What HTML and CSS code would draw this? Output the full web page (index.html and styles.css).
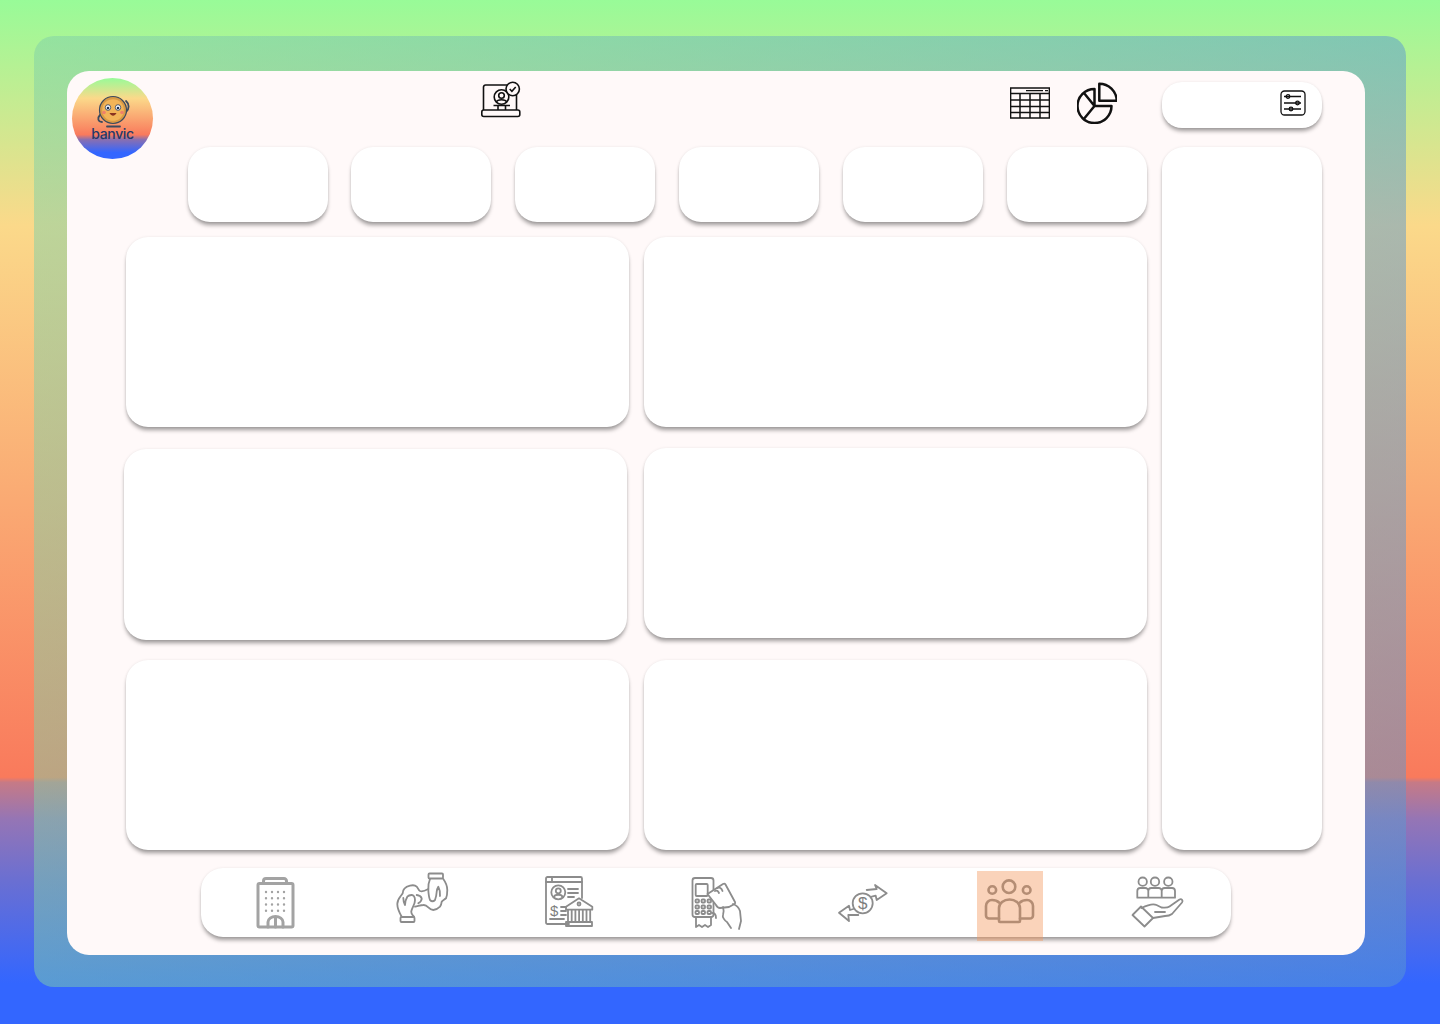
FILE: index.html
```html
<!DOCTYPE html>
<html lang="en">
<head>
<meta charset="utf-8">
<title>Banvic dashboard</title>
<link rel="stylesheet" href="styles.css">
</head>
<body>
<div class="frame">
  <div class="panel">
    <div class="logo">
      <svg class="mascot" viewBox="0 0 40 40" aria-hidden="true">
        <path d="M7 22c-3 3-2 7 2 7M33 8c3.500 3 3.500 8 0 11" class="mascot-arm"/>
        <circle cx="20" cy="17" r="13.500" class="coin"/>
        <circle cx="20" cy="17" r="10.800" class="coin-in"/>
        <ellipse cx="15" cy="14.500" rx="2.700" ry="2.800" class="eye"/>
        <ellipse cx="25" cy="14.500" rx="2.700" ry="2.800" class="eye"/>
        <circle cx="15" cy="15" r="1.300" class="pupil"/>
        <circle cx="25" cy="15" r="1.300" class="pupil"/>
        <path d="M16.500 20c2 3.500 5 3.500 7 0z" class="mouth"/>
        <circle cx="11" cy="19.500" r="1.800" class="cheek"/>
        <circle cx="29" cy="19.500" r="1.800" class="cheek"/>
        <path d="M14 33.500h13" class="mascot-arm"/>
      </svg>
      <span class="logo-text">banvic</span>
    </div>
    <div class="layout">
      <div class="header">
        <svg class="head-icon laptop" viewBox="0 0 40 44" aria-hidden="true">
          <path d="M2.500 30V7a2 2 0 0 1 2-2h29a2 2 0 0 1 2 2v23"/>
          <rect x="0.800" y="30" width="38" height="6.500" rx="2"/>
          <circle cx="20.500" cy="17" r="7.300"/>
          <circle cx="20.500" cy="15.500" r="2.800"/>
          <path d="M15.500 22c.8-3 9.200-3 10 0"/>
          <path d="M12.500 25.500h16.500M17 25.500v4.500M24.500 25.500v4.500"/>
          <circle cx="31.700" cy="9" r="6.700" class="badge"/>
          <path d="M28.700 9l2.200 2.300 3.800-4.300"/>
        </svg>
        <svg class="head-icon table" viewBox="0 0 40 44" aria-hidden="true">
          <rect x="0.600" y="8" width="38.800" height="30"/>
          <path d="M0.500 13.500h39M0.500 20h39M0.500 26.500h39M0.500 32.500h39M10 13.500V38M20 13.500V38M30 13.500V38"/>
          <path d="M16 10.700h17M35 10.700h3" class="thick"/>
        </svg>
        <svg class="head-icon pie" viewBox="0 0 40 44" aria-hidden="true">
          <path d="M17.500 9a17 17 0 1 0 17 17h-17zM17.500 26L7 13M17.500 26L6 40"/>
          <path d="M22.300 3.700v17h17.400A17.400 17.400 0 0 0 22.300 3.700z"/>
        </svg>
      </div>
      <div class="filter">
        <svg class="filter-icon" viewBox="0 0 26 26" aria-hidden="true">
          <rect x="1" y="1" width="24" height="24" rx="3.500"/>
          <path d="M4 6.500h17M4 13h17M4 19h17"/>
          <circle cx="8" cy="6.500" r="1.800"/>
          <circle cx="17.500" cy="13" r="1.800"/>
          <circle cx="11" cy="19" r="1.800"/>
        </svg>
      </div>
      <div class="main">
        <div class="kpis">
          <div class="card kpi kpi-first"></div>
          <div class="card kpi"></div>
          <div class="card kpi"></div>
          <div class="card kpi"></div>
          <div class="card kpi"></div>
          <div class="card kpi"></div>
        </div>
        <div class="charts">
          <div class="card"></div>
          <div class="card"></div>
          <div class="card shifted"></div>
          <div class="card"></div>
          <div class="card last-row"></div>
          <div class="card last-row"></div>
        </div>
      </div>
      <div class="card side"></div>
    </div>
    <nav class="tabs">
      <div class="tab">
        <svg class="tab-icon building" viewBox="0 0 66 70" aria-hidden="true">
          <path d="M21.500 12V10a2.500 2.500 0 0 1 2.500-2.500h18a2.500 2.500 0 0 1 2.500 2.500v2"/>
          <rect x="16" y="12.500" width="35" height="43.500" rx="1.500"/>
          <path d="M26 56v-5a7.500 5.500 0 0 1 15 0v5M33.500 46v10"/>
          <path class="dots" d="M24 21h.01M30 21h.01M36 21h.01M42 21h.01M24 27.300h.01M30 27.300h.01M36 27.300h.01M42 27.300h.01M24 33.500h.01M30 33.500h.01M36 33.500h.01M42 33.500h.01M24 39.700h.01M30 39.700h.01M36 39.700h.01M42 39.700h.01"/>
        </svg>
      </div>
      <div class="tab">
        <svg class="tab-icon thin" viewBox="0 0 66 70" aria-hidden="true">
          <rect x="11.500" y="46" width="14" height="5" rx="1"/>
          <rect x="39.500" y="2.500" width="14.500" height="5" rx="1"/>
          <path d="M12.700 45.700C10 41 8.300 38 8.300 33c0-5 3-7 5.400-10.700 0-3.500 3-6.500 7.300-7.600 3-.8 5.500-.2 6.700 1 1.500 1.500 1.500 3.300 3.300 4.300 2 .8 5.500-.5 8.300-2"/>
          <path d="M25 45.700c-2.500-2.500-3.500-4.500-2.300-6.700 1-3 3.500-6.500 3.300-10 0-3-1.500-5.200-3.500-5-2.500.2-3.500 1-4.200 1.700-1.500 2.500-2.300 5.500-2.300 8.300-1-2-1.700-4.500-1.700-7"/>
          <path d="M54.300 8c2.500 3.500 4 7.500 4 11 0 3.500-.5 6.500-1.300 8.300-1.800 1.500-3.500 2-4.300 3.400-.2 2-.7 3.800-1.700 5-2 2-4.500 3.300-6.700 3.300-2 0-3.500-1.200-5-2.700-1.500-1.500-3-2.500-4.900-2.300-2.500.2-5 1-8.400 1.700"/>
          <path d="M41 8c-1.500 3.500-2 7.500-1.700 11 .2 3.500.5 7 1.700 10 1.500 1.500 3.500 1.500 5 0 1-2.500 1.500-5.500 1.700-8.300.2-2 .8-3.800 1.600-5 1.500 3 2 6.500 1.700 9.300"/>
          <path d="M27.700 24c2 .2 4.300 1.500 5 3.300.2 2-1.500 3.700-3.400 5"/>
        </svg>
      </div>
      <div class="tab">
        <svg class="tab-icon thin" viewBox="0 0 66 70" aria-hidden="true">
          <path d="M33 53H11.500a1.500 1.500 0 0 1-1.500-1.500V7.500A1.500 1.500 0 0 1 11.500 6h33A1.500 1.500 0 0 1 46 7.500V27"/>
          <path d="M10 11h36M16 6v5"/>
          <circle cx="22.300" cy="21.300" r="7"/>
          <circle cx="22.300" cy="19.800" r="2.500"/>
          <path d="M18 26c.5-3 8-3 8.500 0"/>
          <path d="M32 18h10M32 22h10M32 26h6M25 36h5M25 40h5M25 44h5M14 48h14"/>
          <text x="14" y="45" class="dollar small">$</text>
          <path d="M30 35.700L43 27.300l13.300 8.400v3H30z"/>
          <circle cx="43" cy="33" r="1.500"/>
          <path d="M32 51V39M35.700 51V39M39.400 51V39M43.100 51V39M46.800 51V39M50.500 51V39M54.200 51V39"/>
          <path d="M30 51h26v4H30z"/>
        </svg>
      </div>
      <div class="tab">
        <svg class="tab-icon thin" viewBox="0 0 66 70" aria-hidden="true">
          <rect x="9.500" y="7" width="21" height="39" rx="2.500"/>
          <rect x="12.700" y="13" width="12" height="12" rx="1"/>
          <path d="M13 46v10l3-2 3 2 3-2 3 2 3-2V46"/>
          <rect x="12.500" y="28.500" width="3.500" height="3" rx="1"/>
          <rect x="18.500" y="28.500" width="3.500" height="3" rx="1"/>
          <rect x="24.500" y="28.500" width="3.500" height="3" rx="1"/>
          <rect x="12.500" y="34.500" width="3.500" height="3" rx="1"/>
          <rect x="18.500" y="34.500" width="3.500" height="3" rx="1"/>
          <rect x="24.500" y="34.500" width="3.500" height="3" rx="1"/>
          <rect x="12.500" y="40" width="3.500" height="3" rx="1"/>
          <rect x="18.500" y="40" width="3.500" height="3" rx="1"/>
          <rect x="24.500" y="40" width="3.500" height="3" rx="1"/>
          <path class="cover" d="M24.500 23L40 13c1-.5 2-.3 2.500.5L52 31c.5 1 .3 1.500-.5 2L46 36l-9 1c-2 0-3-1-4-3z"/>
          <path d="M32 20c2-1 3 0 4 2M34.500 17c2-1 4 0 5 3"/>
          <path d="M40 36c1 3 1 5 0 8-1 2 2 6 4 7l4 6M50 33c3 1 6 4 7 7l1 10-2 8"/>
          <path d="M29 42c3 0 4 2 4 5"/>
        </svg>
      </div>
      <div class="tab">
        <svg class="tab-icon thin" viewBox="0 0 66 70" aria-hidden="true">
          <path d="M36.700 19l10-1-1.700-4 11.700 8.300L46.700 29l-1-4.300-4 1"/>
          <path d="M28.300 44H18.300l.7 6L9 41.700l10-7 1 4.300 3.300-1"/>
          <circle cx="32.700" cy="32.300" r="10"/>
          <text x="32.700" y="38" class="dollar">$</text>
        </svg>
      </div>
      <div class="tab active">
        <svg class="tab-icon people" viewBox="0 0 66 70" aria-hidden="true">
          <circle cx="32" cy="15.700" r="6.300"/>
          <circle cx="15.300" cy="19" r="3.800"/>
          <circle cx="49.700" cy="19" r="3.800"/>
          <path d="M22 50V37a10.500 8.500 0 0 1 21 0v13a1 1 0 0 1-1 1H23a1 1 0 0 1-1-1z"/>
          <path d="M22 47.500H12a3 3 0 0 1-3-3V35a6 6 0 0 1 6-6c3 0 5 .5 7 2.500"/>
          <path d="M43 47.500h10a3 3 0 0 0 3-3V35a6 6 0 0 0-6-6c-3 0-5 .5-7 2.500"/>
        </svg>
      </div>
      <div class="tab">
        <svg class="tab-icon thin" viewBox="0 0 66 70" aria-hidden="true">
          <circle cx="18.700" cy="10.700" r="4.200"/>
          <circle cx="31" cy="10.700" r="4.200"/>
          <circle cx="44.300" cy="10.700" r="4.200"/>
          <path d="M13.300 26.700V20a3 3 0 0 1 3-3h5a3 3 0 0 1 3 3v6.700zM24.300 26.700V20a3 3 0 0 1 3-3h7.400a3 3 0 0 1 3 3v6.700zM37.700 26.700V20a3 3 0 0 1 3-3h7.300a3 3 0 0 1 3 3v6.700z"/>
          <path d="M8.500 44l8.500-8.500 12 11.500-8.500 8.500z"/>
          <path d="M17.500 37c6-3 11-5 15-3l5 2.500c4 .5 6 .5 8-1l10-7c2-1 4 1 2.500 3L48 43c-2 1.500-4 2-7 2l-12 2"/>
          <path d="M31 41h10"/>
        </svg>
      </div>
    </nav>
  </div>
</div>
</body>
</html>
```
FILE: styles.css
```css
:root {
  --rainbow: #98fb98 0%, #fbd98a 22%, #f97a5c 75.9%, #c67a86 76.4%, #9575b5 80%, #6a6fd2 86%, #3366ff 96%;
  --panel: #fff9f9;
  --lift: 0 4px 4px -1px rgba(0, 0, 0, .38), 0 0 3px rgba(0, 0, 0, .08);
}
* { box-sizing: border-box; }
html, body { height: 100%; }
body {
  margin: 0;
  padding: 36px 34px 37px;
  background: linear-gradient(180deg, var(--rainbow));
  font-family: "Inter", "Liberation Sans", sans-serif;
}
.frame {
  height: 951px;
  padding: 35px 41px 32px 33px;
  border-radius: 20px;
  background: linear-gradient(90deg, rgba(128, 208, 168, .5), rgba(90, 152, 208, .5));
}
.panel {
  position: relative;
  height: 884px;
  padding: 9px 0 18px 59px;
  border-radius: 22px;
  background: var(--panel);
}
.logo {
  position: absolute;
  left: 5px;
  top: 7px;
  width: 81px;
  height: 81px;
  border-radius: 50%;
  background: linear-gradient(180deg, #98fb98 0%, #fbd98a 25%, #f97a5c 70%, #8a6fb0 76%, #3366ff 92%);
  display: flex;
  flex-direction: column;
  align-items: center;
  padding-top: 15px;
}
.mascot { width: 40px; height: 40px; flex: none; }
.mascot-arm { fill: none; stroke: #3c4a5e; stroke-width: 1.800; stroke-linecap: round; }
.coin { fill: #d99a45; stroke: #3c4a5e; stroke-width: 1.200; }
.coin-in { fill: #f2b458; }
.eye { fill: #fff; stroke: #25395c; stroke-width: .800; }
.pupil { fill: #1e2f50; }
.mouth { fill: #8a3320; }
.cheek { fill: #f0806a; }
.logo-text {
  margin-top: -7px;
  font-size: 14px;
  line-height: 16px;
  font-weight: 500;
  letter-spacing: -.35px;
  color: #22396b;
}
.layout {
  display: grid;
  grid-template-columns: 1021px 160px;
  grid-template-rows: 67px auto;
  column-gap: 15px;
}
.header { display: flex; align-items: flex-start; padding: 0 30px 0 355px; }
.head-icon {
  width: 40px;
  height: 44px;
  flex: none;
  fill: none;
  stroke: #111;
  stroke-width: 1.600;
}
.table { margin-left: auto; stroke-width: 1.500; }
.table .thick { stroke-width: 1.300; }
.pie { margin-left: 27px; stroke-width: 2.500; stroke-linejoin: round; }
.badge { fill: var(--panel); }
.filter {
  height: 46px;
  margin-top: 2px;
  padding: 8px 16px 0 0;
  display: flex;
  justify-content: flex-end;
  background: #fff;
  border-radius: 20px;
  box-shadow: var(--lift);
}
.filter-icon {
  width: 26px;
  height: 26px;
  fill: none;
  stroke: #111;
  stroke-width: 1.300;
}
.card {
  background: #fff;
  border-radius: 22px;
  box-shadow: var(--lift);
}
.kpis { display: flex; justify-content: flex-end; gap: 24px; }
.kpi { width: 140px; height: 75px; }
.kpi-first { margin-right: -1px; }
.charts {
  margin-top: 15px;
  display: grid;
  grid-template-columns: 503px 503px;
  grid-template-rows: 190px 190px 191px;
  gap: 21px 15px;
}
.shifted { height: 191px; margin: 1px 2px 0 -2px; }
.last-row { height: 190px; margin-top: 1px; }
.side { height: 703px; }
.tabs {
  width: 1030px;
  height: 69px;
  margin: 18px 0 0 75px;
  padding-left: 41px;
  display: flex;
  align-items: flex-start;
  gap: 81px;
  background: #fff;
  border-radius: 22px;
  box-shadow: var(--lift);
}
.tab { width: 66px; height: 70px; margin-top: 3px; flex: none; }
.active { background: rgba(243, 150, 90, .42); }
.tab-icon {
  display: block;
  width: 66px;
  height: 70px;
  fill: none;
  stroke: #a3a3a3;
  stroke-width: 3;
  stroke-linejoin: round;
  stroke-linecap: round;
}
.tab-icon .dots { stroke-width: 2.400; }
.thin { stroke: #8c8c8c; stroke-width: 1.800; }
.people { stroke: #b48d74; stroke-width: 2.600; }
.cover { fill: #fff; }
.dollar {
  fill: #7e7e7e;
  stroke: none;
  font-family: "Liberation Sans", sans-serif;
  font-size: 17px;
  text-anchor: middle;
}
.dollar.small { font-size: 15px; text-anchor: start; }
```
